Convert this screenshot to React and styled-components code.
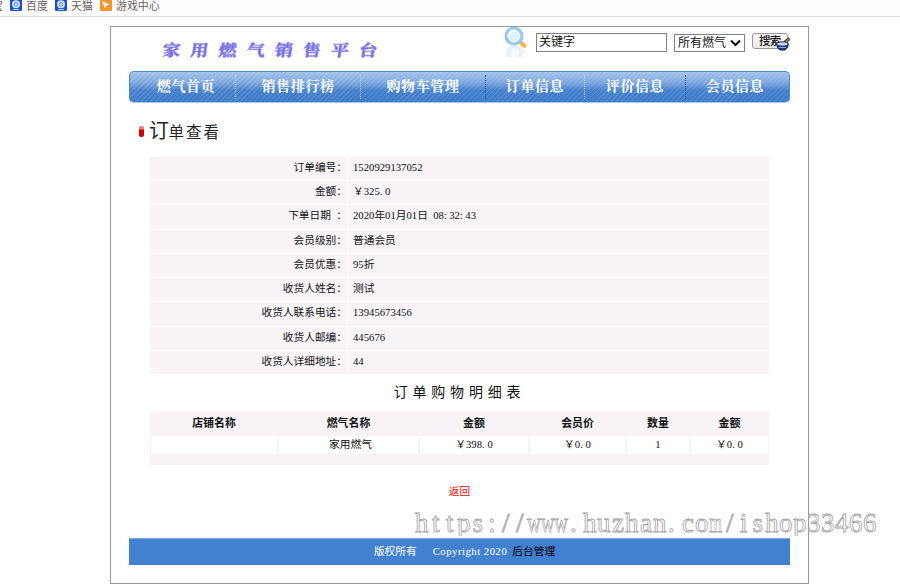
import React from "react";
import styled, { createGlobalStyle, css } from "styled-components";

const GlobalStyle = createGlobalStyle`
  * { box-sizing: border-box; }
  html, body { margin: 0; background: #fff; overflow: hidden; }
  body {
    font-family: "Liberation Serif", "Noto Sans CJK SC", serif;
    font-size: 10.7px;
    color: #111;
  }
`;

const Page = styled.div`
  position: relative;
  width: 900px;
  height: 585px;
  overflow: hidden;
`;

const BookmarkBar = styled.div`
  display: flex;
  align-items: center;
  height: 17px;
  padding: 0 0 7px 0;
  border-bottom: 1px solid #e2e2e2;
  background: #fefefe;
  color: #6c5c5c;
  font: 10.9px/14px "Noto Sans CJK SC", sans-serif;
`;

const Cropped = styled.span`
  display: flex;
  justify-content: flex-end;
  width: 3px;
  margin-right: 7px;
  overflow: hidden;
`;

const Bookmark = styled.span`
  display: flex;
  align-items: center;
  gap: 4px;
  width: ${(p) => p.$width || 45}px;
  white-space: nowrap;
  svg { flex: none; }
`;

const Frame = styled.main`
  display: flex;
  flex-direction: column;
  width: 699px;
  height: 558px;
  margin: 9px 0 0 110px;
  padding: 0 18px;
  border: 1px solid #999;
`;

const Header = styled.header`
  display: flex;
  height: 44px;
`;

const Logo = styled.h1`
  width: 373px;
  margin: 9px 0 0;
  padding-left: 33px;
  color: #756de5;
  font: 700 18px/24px "Noto Serif CJK SC", "Noto Sans CJK SC", serif;
  letter-spacing: 10.1px;
  transform: skewX(-7deg) scaleY(0.88);
  -webkit-text-stroke: 0.5px #8a83ea;
  text-shadow: 0 0 2px #b9b5f5;
  white-space: nowrap;
`;

const SearchForm = styled.div`
  display: flex;
  align-items: flex-start;
  font: 12px/14px "Noto Sans CJK SC", sans-serif;
  svg { flex: none; }
`;

const Keyword = styled.div`
  width: 131px;
  height: 19px;
  margin: 6px 7px 0 6px;
  padding-left: 2px;
  border: 1px solid #808080;
`;

const Select = styled.div`
  display: flex;
  align-items: center;
  justify-content: space-between;
  width: 71px;
  height: 18px;
  margin: 7px 7px 0 0;
  padding: 0 3px 2px;
  border: 1px solid #808080;
  white-space: nowrap;
  svg { margin-top: 2px; }
`;

const SearchButton = styled.div`
  position: relative;
  width: 36px;
  height: 16px;
  margin-top: 6px;
  padding-left: 6px;
  border: 1px solid #999;
  border-radius: 3px;
  background: linear-gradient(#fff, #e8e8e8);
  font-size: 11.5px;
  font-weight: 500;
  line-height: 13px;
  letter-spacing: -0.7px;
  svg { position: absolute; left: 22px; top: 3px; }
`;

const Nav = styled.nav`
  display: grid;
  grid-template-columns: 105px 125px 125px 99px 101px 104px;
  width: 661px;
  height: 32px;
  border: 1px solid #4c88ce;
  border-bottom-color: #a6c7ec;
  border-radius: 5px;
  background:
    repeating-linear-gradient(135deg, rgba(255,255,255,0.11) 0 1px, transparent 1px 3.5px),
    linear-gradient(#a4c2ea 0, #83abe0 32%, #4681cd 62%, #3d7bc9 100%);
`;

const NavItem = styled.a`
  margin: 3px 0 3px;
  padding-left: ${(p) => p.$left || 0}px;
  padding-right: ${(p) => p.$right || 0}px;
  color: #fff;
  font: 700 14px/20px "Noto Serif CJK SC", "Noto Sans CJK SC", serif;
  letter-spacing: 0.6px;
  text-align: center;
  white-space: nowrap;
  border-left: 1px dotted ${(p) => (p.$dark ? "#245a98" : "#b8d4f4")};
  &:first-child { border-left: 0; }
`;

const Title = styled.h2`
  display: flex;
  align-items: center;
  height: 54px;
  margin: 0;
  padding: 2px 0 0 10px;
  color: #222;
  font: 400 15.5px/28px "Noto Sans CJK SC", sans-serif;
  letter-spacing: 2px;
  &::before {
    content: "";
    width: 5px;
    height: 11px;
    margin-right: 5px;
    border-radius: 2px;
    background: linear-gradient(#f57b70 0 25%, #d40000 40%);
  }
`;

const TitleText = styled.span`
  display: block;
  margin-top: -2px;
  &::first-letter { font-size: 20px; letter-spacing: -0.5px; }
`;

const Details = styled.dl`
  display: grid;
  grid-template-columns: 197px 421px;
  grid-template-rows: repeat(9, 1fr);
  gap: 1px;
  width: 619px;
  height: 217px;
  margin: 0 0 0 21px;
  background: #fdfcfd;
`;

const cell = css`
  margin: 0;
  background: #f7f3f7;
  line-height: 21px;
  white-space: pre;
`;

const Label = styled.dt`
  ${cell}
  text-align: right;
`;

const Value = styled.dd`
  ${cell}
  padding-left: 5px;
`;

const Half = styled.span`
  letter-spacing: ${(p) => p.$gap}px;
`;

const Caption = styled.h3`
  height: 37px;
  margin: 0;
  font: 400 14px/34px "Noto Sans CJK SC", sans-serif;
  letter-spacing: 4.8px;
  text-align: center;
`;

const Items = styled.div`
  display: grid;
  grid-template-columns: 128px 141px 110px 97px 64px 79px;
  grid-template-rows: 25px 18px 11px;
  width: 619px;
  margin-left: 21px;
  background: #f7f3f7;
`;

const HeadCell = styled.div`
  font: 700 10.9px/23px "Noto Sans CJK SC", sans-serif;
  text-align: center;
`;

const ItemCell = styled.div`
  margin: 0 1px;
  background: #fff;
  line-height: 17px;
  text-align: center;
  padding-left: ${(p) => p.$shift || 0}px;
`;

const BackLink = styled.a`
  display: block;
  height: 73px;
  padding-top: 18px;
  color: #f00;
  line-height: 16px;
  text-align: center;
`;

const Footer = styled.footer`
  display: flex;
  justify-content: center;
  height: 27px;
  padding-left: 10px;
  border-top: 1px solid #7ea9dd;
  background: #4281cf;
  color: #fff;
  line-height: 24px;
  white-space: pre;
`;

const Copyright = styled.span`
  margin: 0 5px 0 16px;
  letter-spacing: 0.52px;
`;

const AdminLink = styled.a`
  color: #000;
`;

const Watermark = styled.svg`
  position: absolute;
  left: 414px;
  top: 505px;
  width: 470px;
  height: 31px;
  font-family: "Liberation Serif", serif;
  font-size: 27px;
  fill: #fff;
  fill-opacity: 0.6;
  stroke: #a2a2a2;
  stroke-width: 0.8;
`;

const SiteIcon = () => (
  <svg width="12" height="12" viewBox="0 0 12 12">
    <rect width="12" height="12" rx="1.5" fill="#1553d6" />
    <circle cx="6" cy="5.3" r="4" fill="#cfe3fb" />
    <circle cx="6" cy="5.3" r="1.8" fill="none" stroke="#5f8fe0" />
    <path d="M3 10.5h6" stroke="#bcd2fa" />
  </svg>
);

const GameIcon = () => (
  <svg width="12" height="12" viewBox="0 0 12 12">
    <rect width="12" height="12" rx="1" fill="#f7942a" />
    <path d="M2 2.2 10 5.4 6.6 6.4 5.3 9.8Z" fill="#fff" />
  </svg>
);

const Magnifier = () => (
  <svg width="28" height="30" viewBox="0 0 28 30">
    <circle cx="12.5" cy="26" r="6.5" fill="#f3f9fe" stroke="#e3f0fb" strokeWidth="3" />
    <path d="M18.8 15.5 22.5 19" stroke="#f4b746" strokeWidth="4" strokeLinecap="round" />
    <circle cx="12" cy="9" r="8" fill="#e3f2fd" stroke="#94caf2" strokeWidth="3" />
    <path d="M6.5 9a5.5 5.5 0 0 1 7-5" fill="none" stroke="#fff" strokeWidth="2" />
    <path d="M20 25.5 23 23.5" stroke="#fbeccf" strokeWidth="3" />
  </svg>
);

const BowlCursor = () => (
  <svg width="16" height="15" viewBox="0 0 16 15">
    <path d="M9 6 14.5 1.5" stroke="#222" strokeWidth="3" />
    <path d="M9.5 5.7 14.3 1.8" stroke="#dc8b4c" strokeWidth="1.4" />
    <path d="M1.5 7Q2 11 5 13H10Q13 11 13.5 7Z" fill="#173b9a" stroke="#111b45" />
    <ellipse cx="7.5" cy="7" rx="6" ry="2.2" fill="#c9d5e4" stroke="#16295f" />
    <path d="M4 10.5h7" stroke="#7eb0ed" />
  </svg>
);

const nav = [
  { text: "燃气首页", left: 7 },
  { text: "销售排行榜" },
  { text: "购物车管理" },
  { text: "订单信息", dark: true },
  { text: "评价信息" },
  { text: "会员信息", dark: true, right: 5 },
];

const details = [
  ["订单编号：", "1520929137052"],
  ["金额：", "￥325.0"],
  ["下单日期 ：", "2020年01月01日 08:32:43"],
  ["会员级别：", "普通会员"],
  ["会员优惠：", "95折"],
  ["收货人姓名：", "测试"],
  ["收货人联系电话：", "13945673456"],
  ["收货人邮编：", "445676"],
  ["收货人详细地址：", "44"],
];

const headings = ["店铺名称", "燃气名称", "金额", "会员价", "数量", "金额"];
const item = ["", "家用燃气", "￥398.0", "￥0.0", "1", "￥0.0"];

/* Pads narrow punctuation out to the half-width advance of the digits. */
const gaps = { ".": 2.7, ":": 2.4, " ": 2.7 };
const halfWidth = (text) =>
  text.split(/([.: ])/).map((part, i) =>
    gaps[part] ? <Half key={i} $gap={gaps[part]}>{part}</Half> : part
  );

/* Monospaced grid for the site address: narrow letters are centred in their cell. */
const step = 14;
const inset = { t: 3, ":": 3, "/": 3, i: 3, s: 1.5, c: 1, a: 1, z: 1, ".": 1 };
const positions = (start, text) =>
  [...text].map((c, i) => 1 + (start + i) * step + (inset[c] || 0)).join(" ");

export default function App() {
  return (
    <Page>
      <GlobalStyle />
      <BookmarkBar>
        <Cropped>宝</Cropped>
        <Bookmark><SiteIcon />百度</Bookmark>
        <Bookmark><SiteIcon />天猫</Bookmark>
        <Bookmark $width={70}><GameIcon />游戏中心</Bookmark>
      </BookmarkBar>
      <Frame>
        <Header>
          <Logo>家用燃气销售平台</Logo>
          <SearchForm>
            <Magnifier />
            <Keyword>关键字</Keyword>
            <Select>
              所有燃气
              <svg width="11" height="8" viewBox="0 0 11 8">
                <path d="M1 1.5 5.5 6 10 1.5" fill="none" stroke="#111" strokeWidth="2" />
              </svg>
            </Select>
            <SearchButton>搜索<BowlCursor /></SearchButton>
          </SearchForm>
        </Header>
        <Nav>
          {nav.map((n) => (
            <NavItem key={n.text} $dark={n.dark} $left={n.left} $right={n.right}>{n.text}</NavItem>
          ))}
        </Nav>
        <Title><TitleText>订单查看</TitleText></Title>
        <Details>
          {details.map(([label, value]) => (
            <React.Fragment key={label}>
              <Label>{halfWidth(label)}</Label>
              <Value>{halfWidth(value)}</Value>
            </React.Fragment>
          ))}
        </Details>
        <Caption>订单购物明细表</Caption>
        <Items>
          {headings.map((h, i) => <HeadCell key={i}>{h}</HeadCell>)}
          {item.map((v, i) => <ItemCell key={i} $shift={i === 1 ? 4 : 0}>{halfWidth(v)}</ItemCell>)}
        </Items>
        <BackLink>返回</BackLink>
        <Footer>
          版权所有
          <Copyright>Copyright 2020</Copyright>
          <AdminLink>后台管理</AdminLink>
        </Footer>
      </Frame>
      <Watermark>
        <text y="27">
          <tspan x={positions(0, "https://")}>https://</tspan>
          <tspan x={1 + 8 * step} textLength="41" lengthAdjust="spacingAndGlyphs">www</tspan>
          <tspan x={positions(11, ".huzhan.co")}>.huzhan.co</tspan>
          <tspan x={1 + 21 * step} textLength="13" lengthAdjust="spacingAndGlyphs">m</tspan>
          <tspan x={positions(22, "/ishop33466")}>/ishop33466</tspan>
        </text>
      </Watermark>
    </Page>
  );
}
